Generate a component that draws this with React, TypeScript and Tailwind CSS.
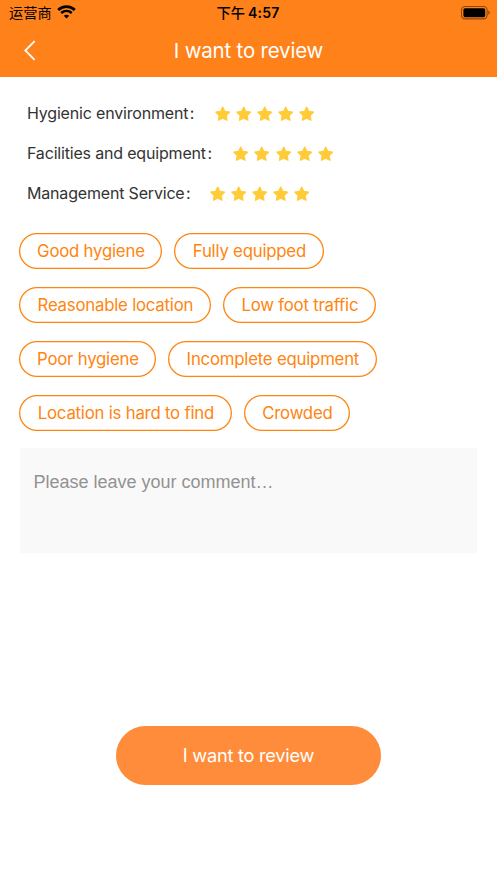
type Rating = {
  label: string;
  labelWidth: string;
  score: number;
};

type Tag = {
  text: string;
  width: string;
};

const ratings: Rating[] = [
  { label: "Hygienic environment", labelWidth: "w-[187.5px]", score: 5 },
  { label: "Facilities and equipment", labelWidth: "w-[206.3px]", score: 5 },
  { label: "Management Service", labelWidth: "w-[182.7px]", score: 5 },
];

const tagRows: Tag[][] = [
  [
    { text: "Good hygiene", width: "w-[143px]" },
    { text: "Fully equipped", width: "w-[150px]" },
  ],
  [
    { text: "Reasonable location", width: "w-[192px]" },
    { text: "Low foot traffic", width: "w-[153px]" },
  ],
  [
    { text: "Poor hygiene", width: "w-[137px]" },
    { text: "Incomplete equipment", width: "w-[209px]" },
  ],
  [
    { text: "Location is hard to find", width: "w-[213px]" },
    { text: "Crowded", width: "w-[106px]" },
  ],
];

function WifiIcon() {
  return (
    <svg className="h-[14px] w-[19px]" viewBox="0 0 19 14" fill="none" stroke="#000">
      <path d="M1.2 4.9C5.9.5 13.1.5 17.8 4.9" strokeWidth="2.8" />
      <path d="M4.2 8C7.3 5.2 11.7 5.2 14.8 8" strokeWidth="2.5" />
      <path d="M9.5 13.5 6.8 10.7C8.3 9.4 10.7 9.4 12.2 10.7Z" fill="#000" stroke="none" />
    </svg>
  );
}

function BatteryIcon() {
  return (
    <svg className="h-[14px] w-[30px]" viewBox="0 0 30 14" fill="none">
      <rect x="0.5" y="0.5" width="25.6" height="12.4" rx="3.6" stroke="#000" strokeOpacity="0.45" strokeWidth="1.1" />
      <rect x="2.4" y="2.2" width="21.8" height="9" rx="1.6" fill="#000" />
      <path d="M27.4 4.6C29.1 5.2 29.1 8.2 27.4 8.8Z" fill="#000" fillOpacity="0.5" />
    </svg>
  );
}

function Star() {
  return (
    <svg className="h-[16px] w-[16px]" viewBox="0 0 16 16">
      <path
        d="M7.7 1 9.8 5.4 14.6 6.1 11.2 9.5 12 14.3 7.7 12.2 3.4 14.3 4.2 9.5 0.8 6.1 5.6 5.4Z"
        fill="#ffcb37"
        stroke="#ffcb37"
        strokeWidth="1.2"
        strokeLinejoin="round"
      />
    </svg>
  );
}

function StatusBar() {
  return (
    <div className="grid h-[25px] grid-cols-3 items-center pr-[6px] pl-[9px] text-[14.2px] leading-none text-black">
      <div className="flex items-center gap-[5px]">
        <span className="pt-[2px]">运营商</span>
        <WifiIcon />
      </div>
      <div className="flex items-center justify-center gap-[3px] pt-[1px] pr-[4px] whitespace-nowrap">
        <span className="pt-[1px] font-medium">下午</span>
        <span className="text-[14px] font-semibold tracking-[0.2px]">4:57</span>
      </div>
      <div className="flex justify-end">
        <BatteryIcon />
      </div>
    </div>
  );
}

function Header() {
  return (
    <header className="h-[77px] bg-[#ff8119]">
      <StatusBar />
      <div className="grid h-[51px] grid-cols-[60px_1fr_60px] items-center text-white">
        <button type="button" aria-label="Back" className="pl-[22.5px]">
          <svg className="h-[22px] w-[14px]" viewBox="0 0 14 22" fill="none" stroke="currentColor" strokeWidth="1.8">
            <path d="M11.6 1.2 2.3 10.5 11.6 19.8" />
          </svg>
        </button>
        <h1 className="pt-[2px] text-center text-[20.5px] leading-none tracking-[-0.2px]">I want to review</h1>
      </div>
    </header>
  );
}

function RatingRow({ label, labelWidth, score }: Rating) {
  return (
    <div className="flex h-[40px] items-center">
      <span className={`${labelWidth} pb-[2px] text-[16px] tracking-[-0.18px] whitespace-nowrap text-[#333]`}>
        {label}
        <span className="ml-[1.5px]">:</span>
      </span>
      <div className="flex gap-[5.2px] pb-[1px]">
        {Array.from({ length: score }, (_, i) => (
          <Star key={i} />
        ))}
      </div>
    </div>
  );
}

export default function App() {
  return (
    <main className="flex h-[883px] w-full flex-col bg-white font-['Inter','Noto_Sans_CJK_SC',sans-serif]">
      <Header />
      <section className="mt-[17px] pl-[27px]">
        {ratings.map((rating) => (
          <RatingRow key={rating.label} {...rating} />
        ))}
      </section>
      <section className="mt-[19px] flex flex-col gap-[18px] pl-[19.4px]">
        {tagRows.map((row, i) => (
          <div key={i} className="flex gap-[12px]">
            {row.map((tag) => (
              <button
                key={tag.text}
                type="button"
                className={`${tag.width} h-[36px] rounded-full text-center text-[16.8px] leading-none tracking-[-0.22px] whitespace-nowrap text-[#ff850f] shadow-[inset_0_0_0_1.3px_#ff850f]`}
              >
                {tag.text}
              </button>
            ))}
          </div>
        ))}
      </section>
      <textarea
        className="mx-[20px] mt-[17px] h-[105px] resize-none bg-[#f9f9f9] px-[13.5px] pt-[23px] font-['Liberation_Sans',sans-serif] text-[18px] leading-[22px] outline-none placeholder:text-[#929292]"
        placeholder="Please leave your comment…"
      />
      <button
        type="button"
        className="mx-auto mt-[173px] h-[59px] w-[265px] rounded-full bg-[#ff8c3a] text-[18.2px] leading-none tracking-[-0.25px] text-white"
      >
        I want to review
      </button>
    </main>
  );
}
